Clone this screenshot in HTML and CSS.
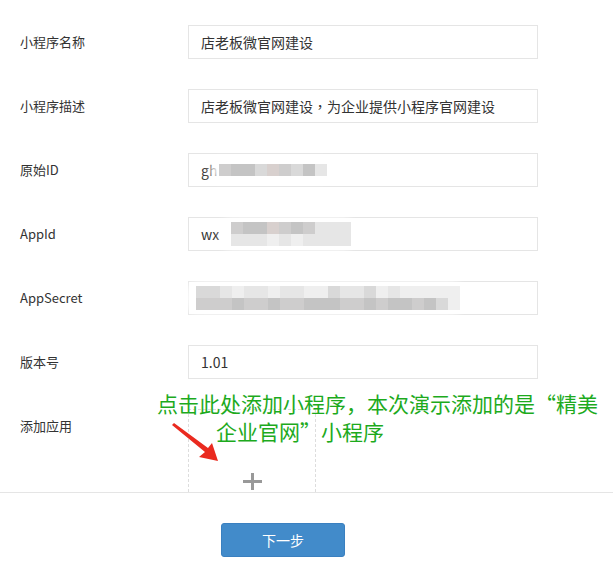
FILE: index.html
```html
<!DOCTYPE html>
<html lang="zh-CN">
<head>
    <meta charset="UTF-8">
    <meta name="viewport" content="width=device-width, initial-scale=1.0">
    <title>添加小程序</title>
    <link rel="stylesheet" href="styles.css">
</head>
<body>
    <div class="page">
        <div class="form-body">
            <div class="form-row">
                <label class="form-label">小程序名称</label>
                <div class="form-field">店老板微官网建设</div>
            </div>
            <div class="form-row">
                <label class="form-label">小程序描述</label>
                <div class="form-field">店老板微官网建设<span class="punct">，</span>为企业提供小程序官网建设</div>
            </div>
            <div class="form-row">
                <label class="form-label">原始ID</label>
                <div class="form-field">gh<span class="mosaic mosaic-id">
                    <i class="c3"></i><i class="c2"></i><i class="c2"></i><i class="c4"></i><i class="c1"></i><i class="c3"></i><i class="c4"></i><i class="c2"></i><i class="c5"></i>
                </span></div>
            </div>
            <div class="form-row">
                <label class="form-label">AppId</label>
                <div class="form-field">wx<span class="mosaic mosaic-appid">
                    <i class="c3"></i><i class="c2"></i><i class="c2"></i><i class="c1"></i><i class="c3"></i><i class="c2"></i><i class="c3"></i><i class="c5"></i><i class="c5"></i><i class="c5"></i>
                    <i class="c5"></i><i class="c5"></i><i class="c5"></i><i class="c6"></i><i class="c5"></i><i class="c6"></i><i class="c5"></i><i class="c5"></i><i class="c5"></i><i class="c5"></i>
                </span></div>
            </div>
            <div class="form-row">
                <label class="form-label">AppSecret</label>
                <div class="form-field field-secret"><span class="mosaic mosaic-secret">
                    <i class="c4"></i><i class="c4"></i><i class="c5"></i><i class="c6"></i><i class="c5"></i><i class="c5"></i><i class="c6"></i><i class="c5"></i><i class="c5"></i><i class="c6"></i><i class="c6"></i><i class="c4"></i><i class="c5"></i><i class="c5"></i><i class="c4"></i><i class="c6"></i><i class="c5"></i><i class="c6"></i><i class="c6"></i><i class="c6"></i><i class="c6"></i><i class="c6"></i>
                    <i class="c3"></i><i class="c3"></i><i class="c3"></i><i class="c2"></i><i class="c3"></i><i class="c3"></i><i class="c2"></i><i class="c3"></i><i class="c3"></i><i class="c2"></i><i class="c2"></i><i class="c2"></i><i class="c3"></i><i class="c3"></i><i class="c2"></i><i class="c3"></i><i class="c2"></i><i class="c2"></i><i class="c3"></i><i class="c2"></i><i class="c4"></i><i class="c6"></i>
                </span></div>
            </div>
            <div class="form-row">
                <label class="form-label">版本号</label>
                <div class="form-field">1.01</div>
            </div>
            <div class="form-row app-row">
                <label class="form-label">添加应用</label>
                <div class="app-add"><span class="app-plus"></span></div>
            </div>
        </div>

        <div class="form-footer">
            <button type="button" class="btn-next">下一步</button>
        </div>

        <!-- 操作提示 -->
        <div class="tip">
            <p class="tip-line">点击此处添加小程序<span class="punct">，</span>本次演示添加的是“精美</p>
            <p class="tip-line tip-indent">企业官网”小程序</p>
        </div>
        <svg class="tip-arrow" width="60" height="50" viewBox="0 0 60 50">
            <polygon points="2,3 4,1 38,26 42,21 48,39 29,35 35,30" fill="#ea2a1f"/>
        </svg>
    </div>
</body>
</html>
```

FILE: styles.css
```css
body {
    margin: 0;
    font-family: "Noto Sans CJK SC", "Microsoft YaHei", sans-serif;
    color: #333;
    background-color: #fff;
}
.page {
    position: relative;
    width: 613px;
    height: 569px;
    overflow: hidden;
}
.form-body {
    height: 492px;
    box-sizing: border-box;
    padding: 25px 0 0 20px;
    overflow: hidden;
}
.form-row {
    display: flex;
    align-items: center;
    height: 34px;
    margin-bottom: 30px;
}
.form-label {
    width: 168px;
    font-size: 13px;
    line-height: 34px;
}
.form-field {
    display: flex;
    align-items: center;
    width: 350px;
    height: 34px;
    box-sizing: border-box;
    padding-left: 12px;
    border: 1px solid #e5e5e5;
    font-size: 14px;
    color: #333;
    white-space: nowrap;
}
.field-secret {
    padding-left: 7px;
}
/* 全角逗号居中显示 */
.punct {
    font-family: "Noto Sans CJK TC", sans-serif;
}
.app-row {
    align-items: flex-start;
}
.app-add {
    width: 128px;
    height: 128px;
    box-sizing: border-box;
    border: 1px dashed #ddd;
    display: flex;
    justify-content: center;
    padding-top: 63px;
}
.app-plus {
    position: relative;
    width: 19px;
    height: 17px;
}
.app-plus::before,
.app-plus::after {
    content: "";
    position: absolute;
    background-color: #999;
}
.app-plus::before {
    left: 0;
    right: 0;
    top: 7px;
    height: 3px;
}
.app-plus::after {
    top: 0;
    bottom: 0;
    left: 8px;
    width: 3px;
}

/* 打码区域 */
.mosaic {
    display: grid;
    grid-auto-rows: 12px;
    filter: blur(0.6px);
    box-shadow: -6px 0 8px 4px rgba(255, 255, 255, 0.9);
    border-radius: 8px 0 0 8px;
}
.mosaic i {
    display: block;
}
.mosaic-id {
    grid-template-columns: repeat(9, 12px);
    margin-left: 2px;
}
.mosaic-appid {
    grid-template-columns: repeat(10, 12px);
    margin-left: 12px;
}
.mosaic-secret {
    grid-template-columns: repeat(22, 12px);
}
.c1 { background-color: #d8d0ce; }
.c2 { background-color: #c4c4c4; }
.c3 { background-color: #cecdcd; }
.c4 { background-color: #d9d9d9; }
.c5 { background-color: #e6e6e6; }
.c6 { background-color: #efefef; }

.form-footer {
    border-top: 1px solid #e5e5e5;
    padding: 30px 0 0 221px;
}
.btn-next {
    width: 124px;
    height: 34px;
    border: 1px solid #3a80c0;
    border-radius: 3px;
    background-color: #428bca;
    color: #fff;
    font-family: "Noto Sans CJK SC", sans-serif;
    font-size: 14px;
    cursor: pointer;
}

.tip {
    position: absolute;
    left: 157px;
    top: 389px;
    color: #1daa1d;
    font-size: 21px;
    line-height: 28px;
}
.tip-line {
    margin: 0;
    white-space: nowrap;
}
.tip-indent {
    padding-left: 59px;
}
.tip-arrow {
    position: absolute;
    left: 170px;
    top: 422px;
}
```
